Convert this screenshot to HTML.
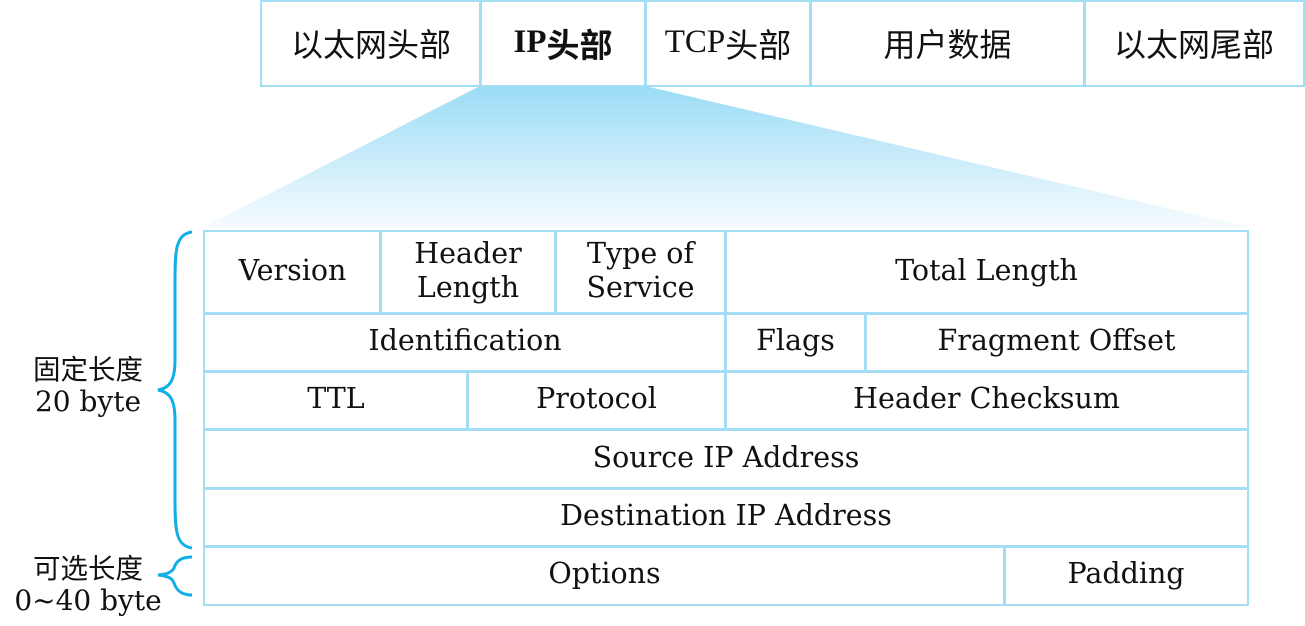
<!DOCTYPE html>
<html><head><meta charset="utf-8"><style>
body{margin:0;width:1305px;height:626px;background:#fff;position:relative;overflow:hidden}
.c{position:absolute;border:2px solid #a3def4;box-sizing:border-box;display:flex;align-items:center;justify-content:center;text-align:center;color:#111;white-space:nowrap}
.t{font-family:"Liberation Serif","Noto Sans CJK SC",sans-serif;font-size:33px;padding-bottom:2px}
.t.cj{font-size:32px}
.d{font-family:"DejaVu Serif",serif;font-size:28.5px;line-height:34px;padding-bottom:3px}
.l{position:absolute;font-family:"DejaVu Serif","Noto Sans CJK SC",sans-serif;font-size:28px;text-align:center;width:176px;left:0;line-height:32px;color:#111;white-space:nowrap}
.cj{font-family:"Noto Sans CJK SC",sans-serif}
.l .cj{font-size:27.5px}
</style></head><body>
<svg style="position:absolute;left:0;top:0" width="1305" height="626">
<defs><linearGradient id="g" x1="0" y1="0" x2="0" y2="1"><stop offset="0" stop-color="#9adcf6"/><stop offset="1" stop-color="#f6fbfe"/></linearGradient></defs>
<polygon points="480,86 645,86 1247,227 204,227" fill="url(#g)"/>
<path d="M192,232 C176,234 175,250 175,280 L175,360 C175,380 170,388 158,390 C170,392 175,400 175,420 L175,500 C175,530 176,546 192,548" fill="none" stroke="#12aee8" stroke-width="3"/>
<path d="M192,557 C180,557 176,562 174,568 C172,572 168,574 158,575 C168,576 172,578 174,583 C176,589 180,595 192,595" fill="none" stroke="#12aee8" stroke-width="3"/>
</svg>
<div class="c t cj" style="left:260px;top:0;width:222px;height:87px">以太网头部</div>
<div class="c t" style="left:479px;top:0;width:168px;height:87px;font-weight:bold">IP<span class="cj">头部</span></div>
<div class="c t" style="left:644px;top:0;width:168px;height:87px">TCP<span class="cj">头部</span></div>
<div class="c t cj" style="left:809px;top:0;width:277px;height:87px">用户数据</div>
<div class="c t cj" style="left:1083px;top:0;width:222px;height:87px">以太网尾部</div>

<div class="c d" style="left:203px;top:230px;width:179px;height:85px">Version</div>
<div class="c d" style="left:379px;top:230px;width:178px;height:85px">Header<br>Length</div>
<div class="c d" style="left:554px;top:230px;width:173px;height:85px">Type of<br>Service</div>
<div class="c d" style="left:724px;top:230px;width:525px;height:85px">Total Length</div>

<div class="c d" style="left:203px;top:312px;width:524px;height:61px">Identification</div>
<div class="c d" style="left:724px;top:312px;width:143px;height:61px">Flags</div>
<div class="c d" style="left:864px;top:312px;width:385px;height:61px">Fragment Offset</div>

<div class="c d" style="left:203px;top:370px;width:266px;height:61px">TTL</div>
<div class="c d" style="left:466px;top:370px;width:261px;height:61px">Protocol</div>
<div class="c d" style="left:724px;top:370px;width:525px;height:61px">Header Checksum</div>

<div class="c d" style="left:203px;top:428px;width:1046px;height:62px">Source IP Address</div>
<div class="c d" style="left:203px;top:487px;width:1046px;height:61px">Destination IP Address</div>
<div class="c d" style="left:203px;top:545px;width:803px;height:61px">Options</div>
<div class="c d" style="left:1003px;top:545px;width:246px;height:61px">Padding</div>

<div class="l" style="top:351px"><span class="cj">固定长度</span><br>20 byte</div>
<div class="l" style="top:550px"><span class="cj">可选长度</span><br>0~40 byte</div>
</body></html>
